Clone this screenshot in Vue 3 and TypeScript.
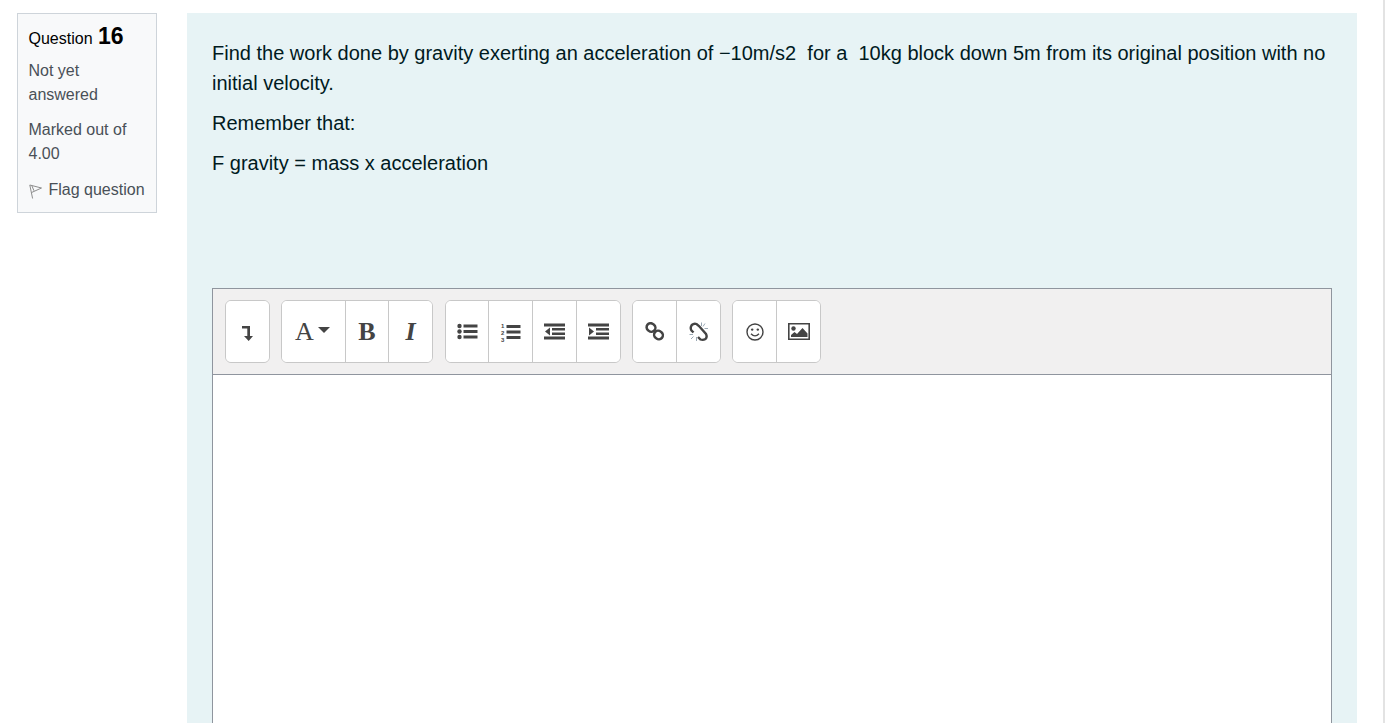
<script setup lang="ts">
const intro = "Find the work done by gravity exerting an acceleration of −10m/s2 \u00a0for a \u00a010kg block down 5m from its original position with no initial velocity."
</script>

<template>
  <div class="page">
    <aside class="info">
      <h3 class="qno">Question <span class="num">16</span></h3>
      <div class="state">Not yet answered</div>
      <div class="grade">Marked out of 4.00</div>
      <div class="flag">
        <svg class="flag-icon" width="13" height="15" viewBox="0 0 13 15" fill="none" stroke="#8d8d8d" stroke-width="1">
          <path d="M0.800 1 L3.600 14.500 M0.800 1 L12.500 4 L2.400 8.600 M2.800 1.600 L5 6.800" />
        </svg>
        <span>Flag question</span>
      </div>
    </aside>
    <main class="content">
      <p>{{ intro }}</p>
      <p>Remember that:</p>
      <p>F gravity = mass x acceleration</p>
      <section class="editor">
        <div class="toolbar">
          <div class="group">
            <button class="btn" type="button" aria-label="Show more buttons">
              <svg width="14" height="18" viewBox="0 0 14 18" fill="#444">
                <path d="M1 3H9V13h3L7.700 18 3 13h3.300V5.500H1z" />
              </svg>
            </button>
          </div>
          <div class="group">
            <button class="btn wide serif" type="button">
              <span>A</span>
              <svg class="caret" width="12" height="6" viewBox="0 0 12 6" fill="#444"><path d="M0 0h12L6 6z" /></svg>
            </button>
            <button class="btn serif bold" type="button">B</button>
            <button class="btn serif bold italic" type="button">I</button>
          </div>
          <div class="group lists">
            <button class="btn" type="button" aria-label="Unordered list">
              <svg width="21" height="17" viewBox="0 0 21 17" fill="#444">
                <circle cx="2.500" cy="3" r="2.200" /><circle cx="2.500" cy="8.500" r="2.200" /><circle cx="2.500" cy="14" r="2.200" />
                <path d="M6.500 1.500h14v3h-14zM6.500 7h14v3h-14zM6.500 12.500h14v3h-14z" />
              </svg>
            </button>
            <button class="btn" type="button" aria-label="Ordered list">
              <svg width="21" height="22" viewBox="0 0 21 22" fill="#444">
                <text class="digit" x="1" y="7">1</text>
                <text class="digit" x="1" y="14">2</text>
                <text class="digit" x="1" y="21">3</text>
                <path d="M6.500 4h14v3h-14zM6.500 9.500h14v3h-14zM6.500 15h14v3h-14z" />
              </svg>
            </button>
            <button class="btn" type="button" aria-label="Outdent">
              <svg width="21" height="17" viewBox="0 0 21 17" fill="#444">
                <path d="M0 0.500h21v3H0zM0 13.500h21v3H0zM8 5h13v2.500H8zM8 9.500h13v2.500H8z" />
                <path d="M6 4.500v8L1 8.500z" />
              </svg>
            </button>
            <button class="btn" type="button" aria-label="Indent">
              <svg width="21" height="17" viewBox="0 0 21 17" fill="#444">
                <path d="M0 0.500h21v3H0zM0 13.500h21v3H0zM8 5h13v2.500H8zM8 9.500h13v2.500H8z" />
                <path d="M1 4.500v8l5-4z" />
              </svg>
            </button>
          </div>
          <div class="group">
            <button class="btn" type="button" aria-label="Link">
              <svg width="20" height="19" viewBox="0 0 20 19" fill="none" stroke="#444" stroke-width="2.500">
                <rect x="1.500" y="1.500" width="9" height="8" rx="4" transform="rotate(40 6 5.500)" />
                <rect x="9" y="9" width="9" height="8" rx="4" transform="rotate(40 13.500 13)" />
              </svg>
            </button>
            <button class="btn" type="button" aria-label="Unlink">
              <svg width="20" height="20" viewBox="0 0 20 20" fill="none">
                <path d="M4.500 10.500 L2.500 8.500 Q0.800 6 2.800 3 Q5 1 7.500 2 L10 4 L17 12 Q18.500 15 16.500 17 Q14 18.500 11.500 17.500 L9 15" stroke="#444" stroke-width="2.400" />
                <path d="M12.500 0.500v3.500M16 1.500l-2 3M19 6.500h-3.500M0.500 12.500h3.500M4.500 14.500l-2.500 2.500M7.500 15v4" stroke="#9aa8b4" stroke-width="1" />
              </svg>
            </button>
          </div>
          <div class="group">
            <button class="btn" type="button" aria-label="Emoticon">
              <svg width="18" height="18" viewBox="0 0 18 18" fill="none" stroke="#444" stroke-width="1.400">
                <circle cx="9" cy="9" r="8" />
                <path d="M5 10.800 Q9 15 13 10.800" />
                <circle cx="6.200" cy="6.600" r="1.200" fill="#444" stroke="none" />
                <circle cx="11.800" cy="6.600" r="1.200" fill="#444" stroke="none" />
              </svg>
            </button>
            <button class="btn" type="button" aria-label="Image">
              <svg width="22" height="17" viewBox="0 0 22 17" fill="#444">
                <path fill-rule="evenodd" d="M0 0h22v17H0zM1.600 1.600v13.800h18.800V1.600z" />
                <circle cx="5.500" cy="5.500" r="2.200" />
                <path d="M3 14v-2l3.500-3 2.500 2 5.500-6 5 5.500V14z" />
              </svg>
            </button>
          </div>
        </div>
        <div class="area"></div>
      </section>
    </main>
  </div>
</template>

<style>
html, body { margin: 0; padding: 0; background: #fff; overflow: hidden; }
</style>

<style scoped>
.page {
  box-sizing: border-box;
  width: 1385px;
  height: 723px;
  overflow: hidden;
  display: flex;
  align-items: flex-start;
  gap: 30px;
  padding: 13px 26px 0 17px;
  border-right: 2px solid #e3e3e3;
  font-family: "Liberation Sans", Arial, sans-serif;
  background: #fff;
}
.info {
  box-sizing: border-box;
  flex: 0 0 140px;
  height: 200px;
  padding: 9px 10px 0 10.500px;
  background: #f8f9fa;
  border: 1px solid #ced4da;
  color: #495057;
  font-size: 16px;
  line-height: 24px;
}
.qno {
  margin: 0 0 7px;
  font-weight: 400;
  font-size: 16px;
  line-height: 27px;
  color: #000;
}
.num { font-size: 23px; font-weight: 700; margin-left: 1px; }
.state { margin-bottom: 11px; }
.grade { margin-bottom: 12px; }
.flag { display: flex; align-items: center; gap: 7px; white-space: nowrap; }
.flag-icon { flex: none; margin-top: 3px; }
.content {
  box-sizing: border-box;
  flex: 1;
  height: 900px;
  padding: 25px 25px 0;
  background: #e7f3f5;
  color: #001a1e;
  font-size: 20px;
  line-height: 30px;
}
.content p { margin: 0 0 10px; }
.editor {
  margin-top: 110px;
  border: 1px solid #8f959e;
  height: 600px;
  background: #fff;
}
.toolbar {
  display: flex;
  gap: 11px;
  padding: 11px 12px;
  height: 63px;
  background: #f1f0f0;
  border-bottom: 1px solid #8f959e;
}
.group {
  display: flex;
  height: 63px;
  box-sizing: border-box;
  background: #fff;
  border: 1px solid #c8c8c8;
  border-radius: 6px;
  overflow: hidden;
}
.lists { margin-left: 1px; }
.btn {
  box-sizing: border-box;
  width: 44px;
  height: 61px;
  margin: 0;
  padding: 0;
  border: 0;
  border-left: 1px solid #c8c8c8;
  background: #fff;
  color: #444;
  display: flex;
  align-items: center;
  justify-content: center;
  font-family: "Liberation Serif", "Times New Roman", serif;
}
.btn:first-child { border-left: 0; width: 43px; }
.lists .btn:first-child { width: 42px; }
.btn.wide { width: 63px; gap: 4px; padding-right: 2px; }
.serif { font-size: 26px; line-height: 1; }
.serif + .bold { width: 43px; }
.serif + .bold + .italic { width: 44px; }
.bold { font-weight: 700; }
.italic { font-style: italic; }
.caret { margin-top: -3px; }
.digit { font: 700 6px "Liberation Sans", Arial, sans-serif; }
.area { background: #fff; }
</style>
